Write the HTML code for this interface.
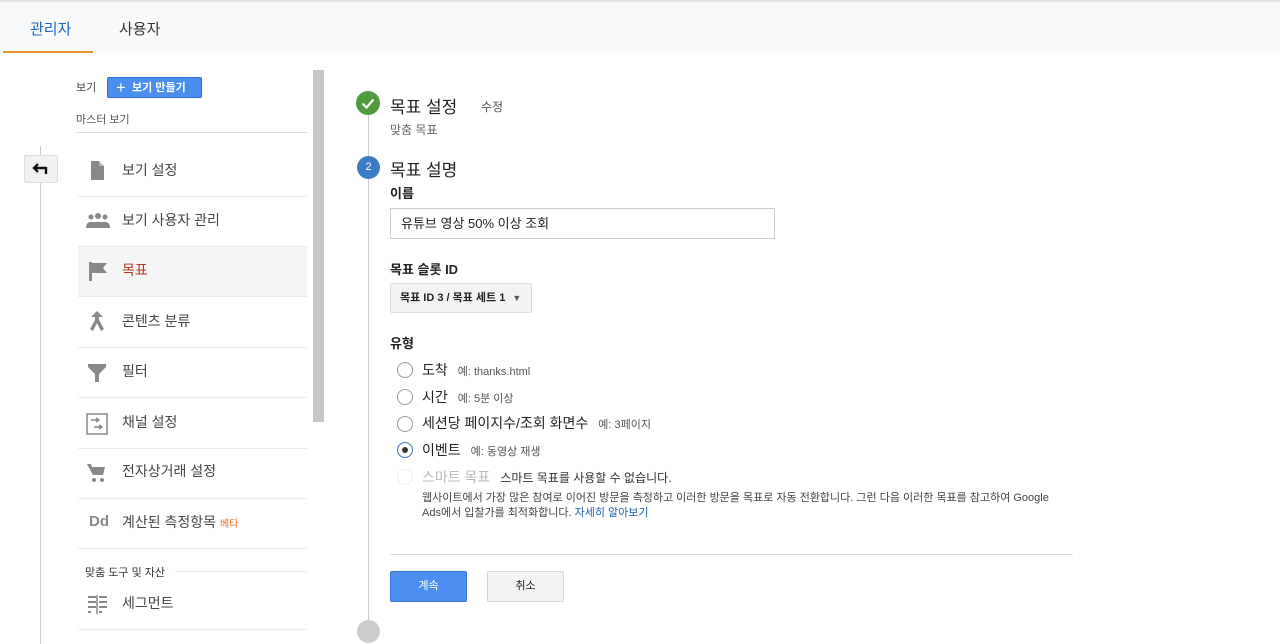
<!DOCTYPE html>
<html><head><meta charset="utf-8"><style>
*{margin:0;padding:0;box-sizing:border-box}
body{width:1280px;height:644px;overflow:hidden;background:#fff;font-family:"Liberation Sans","Noto Sans CJK KR",sans-serif;color:#222;position:relative}
.a{position:absolute;white-space:nowrap}
.top{position:absolute;left:0;top:0;width:1280px;height:53px;background:#f8f9fa;border-top:2px solid #e3e3e3}
.sep{position:absolute;left:78px;width:229px;height:1px;background:#ebebeb}
.mi{position:absolute;left:122px;font-size:14px;color:#444;line-height:20px}
.ic{position:absolute;left:86px}
.radio{position:absolute;left:397px;width:16px;height:16px;border:1px solid #999;border-radius:50%;background:#fff}
.rl{position:absolute;left:422px;font-size:14px;color:#222;line-height:18px}
.rh{font-size:11px;color:#555;margin-left:10px}
</style></head><body>
<div class="top"></div>
<div class="a" style="left:30px;top:18px;font-size:15px;color:#1a66c0">관리자</div>
<div class="a" style="left:119px;top:18px;font-size:15px;color:#333">사용자</div>
<div class="a" style="left:3px;top:51px;width:90px;height:2px;background:#e8922b"></div>

<div class="a" style="left:40px;top:146px;width:1px;height:498px;background:#ccc"></div>
<div class="a" style="left:24px;top:155px;width:34px;height:28px;background:#f1f1f1;border:1px solid #ddd;border-radius:2px"><svg width="32" height="26" viewBox="0 0 32 26"><path d="M9 12h12M13 8l-4 4 4 4" stroke="#111" stroke-width="2.4" fill="none"/><path d="M21 11v7" stroke="#111" stroke-width="2.4"/></svg></div>
<div class="a" style="left:313px;top:70px;width:11px;height:352px;background:#c8c8c8"></div>

<div class="a" style="left:76px;top:79px;font-size:11px;color:#444">보기</div>
<div class="a" style="left:107px;top:77px;width:95px;height:21px;background:#4a8ef0;border:1px solid #2f6fd0;border-radius:2px;color:#fff;font-size:11px;font-weight:bold;line-height:19px;padding-left:8px"><span style="font-size:17px;font-weight:normal;vertical-align:-2px">+</span>&nbsp;&nbsp;보기 만들기</div>
<div class="a" style="left:76px;top:111px;font-size:11px;color:#555">마스터 보기</div>
<div class="a" style="left:76px;top:132px;width:231px;height:1px;background:#ddd"></div>

<div class="a" style="left:78px;top:246px;width:229px;height:50px;background:#f5f5f5"></div>
<div class="sep" style="top:196px"></div><div class="sep" style="top:246px"></div><div class="sep" style="top:296px"></div><div class="sep" style="top:347px"></div><div class="sep" style="top:397px"></div><div class="sep" style="top:448px"></div><div class="sep" style="top:498px"></div><div class="sep" style="top:548px"></div><div class="sep" style="top:629px"></div>

<svg class="ic" style="top:160px" width="22" height="22" viewBox="0 0 22 22"><path d="M5 1h8l5 5v14H5z" fill="#888"/><path d="M13 1v5h5" fill="#bbb"/></svg>
<div class="mi" style="top:160px">보기 설정</div>
<svg class="ic" style="top:212px" width="24" height="18" viewBox="0 0 24 18"><circle cx="5" cy="5" r="2.5" fill="#888"/><circle cx="12" cy="4" r="3" fill="#888"/><circle cx="19" cy="5" r="2.5" fill="#888"/><path d="M0 16q0-6 5-6q7 0 7 0q7 0 7 0q5 0 5 6z" fill="#888"/></svg>
<div class="mi" style="top:210px">보기 사용자 관리</div>
<svg class="ic" style="top:260px" width="22" height="22" viewBox="0 0 22 22"><path d="M3 2h3v19H3z" fill="#888"/><path d="M6 3h15l-4 5 4 5H6z" fill="#888"/></svg>
<div class="mi" style="top:260px;color:#b3361e">목표</div>
<svg class="ic" style="top:310px" width="22" height="22" viewBox="0 0 22 22"><path d="M11 1l6 6h-4v3l5 9-3 2-4-8-4 8-3-2 5-9V7H5z" fill="#888"/></svg>
<div class="mi" style="top:311px">콘텐츠 분류</div>
<svg class="ic" style="top:362px" width="22" height="22" viewBox="0 0 22 22"><path d="M2 2h18v3l-7 7v8h-4v-8L2 5z" fill="#888"/></svg>
<div class="mi" style="top:361px">필터</div>
<svg class="ic" style="top:413px" width="22" height="22" viewBox="0 0 22 22"><rect x="1" y="1" width="20" height="20" fill="none" stroke="#888" stroke-width="1.5"/><path d="M5 7h8M10 5l3 2-3 2M8 14h8M13 12l3 2-3 2" stroke="#888" stroke-width="1.5" fill="none"/></svg>
<div class="mi" style="top:412px">채널 설정</div>
<svg class="ic" style="top:462px" width="22" height="22" viewBox="0 0 22 22"><path d="M1 2h4l1 3h13l-2 8H7z" fill="#888"/><circle cx="8" cy="18" r="2" fill="#888"/><circle cx="16" cy="18" r="2" fill="#888"/></svg>
<div class="mi" style="top:461px">전자상거래 설정</div>
<div class="a" style="left:89px;top:513px;font-size:15px;font-weight:bold;color:#888">Dd</div>
<div class="mi" style="top:512px">계산된 측정항목 <span style="font-size:10px;color:#e07020">베타</span></div>
<div class="a" style="left:85px;top:564px;font-size:11px;color:#333">맞춤 도구 및 자산</div>
<div class="a" style="left:175px;top:571px;width:132px;height:1px;background:#ebebeb"></div>
<svg class="ic" style="top:594px" width="22" height="20" viewBox="0 0 22 20"><path d="M2 3h8M2 8h8M2 13h8M2 18h3M13 3h8M13 8h8M13 13h8M13 18h3" stroke="#888" stroke-width="2"/><path d="M11 1v19" stroke="#888" stroke-width="1.5"/></svg>
<div class="mi" style="top:593px">세그먼트</div>

<div class="a" style="left:368px;top:112px;width:1px;height:510px;background:#ccc"></div>
<div class="a" style="left:356px;top:91px;width:24px;height:24px;border-radius:50%;background:#4e9a3c"><svg width="24" height="24"><path d="M6.5 12.5l4 4 7-8" stroke="#fff" stroke-width="2.2" fill="none"/></svg></div>
<div class="a" style="left:390px;top:93px;font-size:17px;color:#222">목표 설정</div>
<div class="a" style="left:481px;top:98px;font-size:12px;color:#555">수정</div>
<div class="a" style="left:390px;top:121px;font-size:12px;color:#666">맞춤 목표</div>
<div class="a" style="left:357px;top:156px;width:23px;height:23px;border-radius:50%;background:#3b7bc4;color:#fff;font-size:11px;text-align:center;line-height:23px">2</div>
<div class="a" style="left:390px;top:156px;font-size:17px;color:#222">목표 설명</div>
<div class="a" style="left:390px;top:183px;font-size:13px;font-weight:bold">이름</div>
<div class="a" style="left:390px;top:208px;width:385px;height:31px;border:1px solid #ccc;font-size:13px;line-height:29px;padding-left:10px">유튜브 영상 50% 이상 조회</div>
<div class="a" style="left:390px;top:259px;font-size:13px;font-weight:bold">목표 슬롯 ID</div>
<div class="a" style="left:390px;top:283px;width:142px;height:30px;background:#f3f3f3;border:1px solid #ddd;border-radius:2px;font-size:11px;font-weight:bold;line-height:28px;padding-left:9px">목표 ID 3 / 목표 세트 1 <span style="font-size:9px;color:#555;margin-left:4px">▼</span></div>
<div class="a" style="left:390px;top:333px;font-size:13px;font-weight:bold">유형</div>

<div class="radio" style="top:362px"></div><div class="rl" style="top:361px">도착<span class="rh">예: thanks.html</span></div>
<div class="radio" style="top:389px"></div><div class="rl" style="top:388px">시간<span class="rh">예: 5분 이상</span></div>
<div class="radio" style="top:416px"></div><div class="rl" style="top:414px">세션당 페이지수/조회 화면수<span class="rh">예: 3페이지</span></div>
<div class="radio" style="top:442px;border-color:#3b6fc0"><div style="position:absolute;left:4px;top:4px;width:6px;height:6px;border-radius:50%;background:#333"></div></div><div class="rl" style="top:441px">이벤트<span class="rh">예: 동영상 재생</span></div>
<div class="radio" style="top:469px;border-color:#eee"></div><div class="rl" style="top:468px;color:#bbb">스마트 목표<span class="rh" style="color:#333;font-size:12px">스마트 목표를 사용할 수 없습니다.</span></div>
<div class="a" style="left:422px;top:491px;font-size:11px;color:#444;line-height:15px">웹사이트에서 가장 많은 참여로 이어진 방문을 측정하고 이러한 방문을 목표로 자동 전환합니다. 그런 다음 이러한 목표를 참고하여 Google<br>Ads에서 입찰가를 최적화합니다. <span style="color:#1a5ea8">자세히 알아보기</span></div>
<div class="a" style="left:390px;top:554px;width:683px;height:1px;background:#ddd"></div>
<div class="a" style="left:390px;top:571px;width:77px;height:31px;background:#4d8ff0;border:1px solid #3a74d0;border-radius:2px;color:#fff;font-size:11px;text-align:center;line-height:29px">계속</div>
<div class="a" style="left:487px;top:571px;width:77px;height:31px;background:#f3f3f3;border:1px solid #d6d6d6;border-radius:2px;color:#222;font-size:11px;text-align:center;line-height:29px">취소</div>
<div class="a" style="left:357px;top:620px;width:23px;height:23px;border-radius:50%;background:#ccc"></div>
</body></html>
